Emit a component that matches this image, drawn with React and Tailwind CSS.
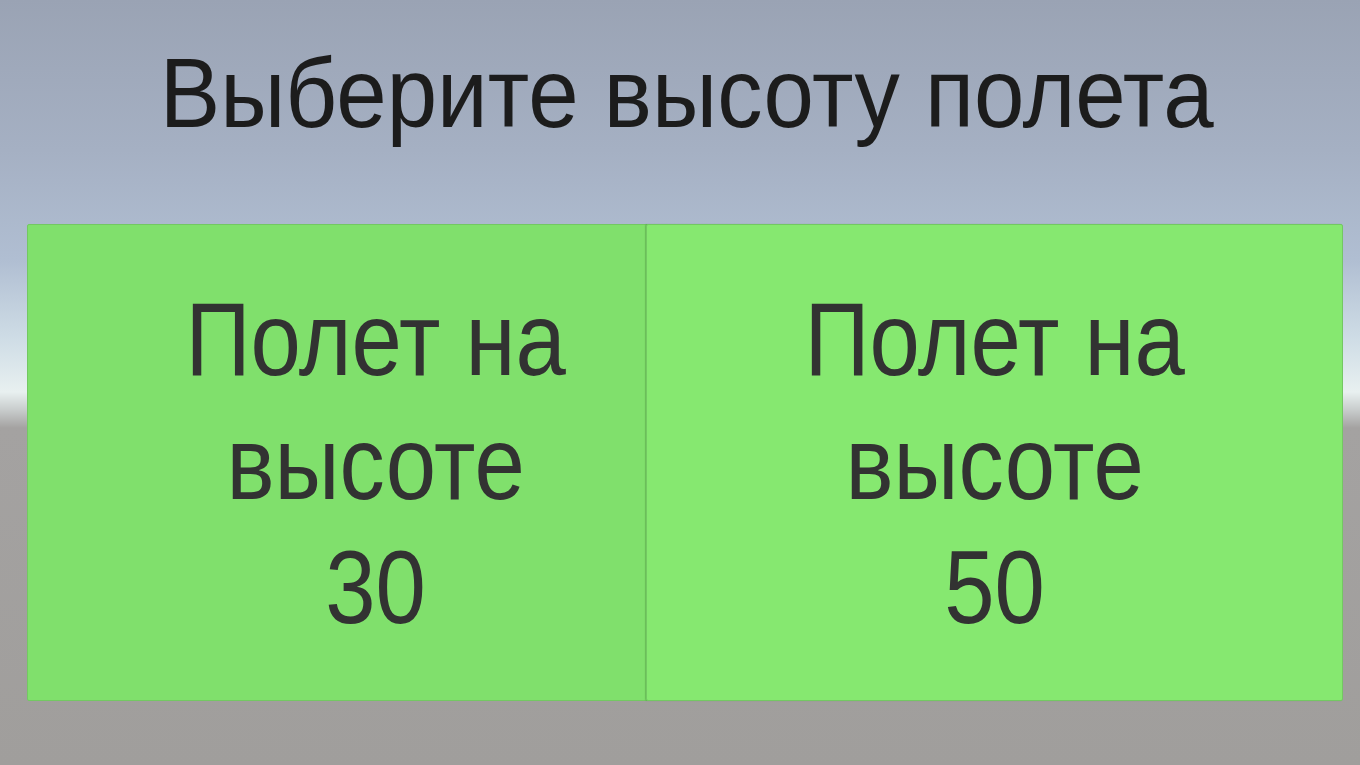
import React from 'react';

const options = [
  { height: 30, bg: 'bg-[#80e06c]' },
  { height: 50, bg: 'bg-[#86e870]' },
];

const AltitudeButton = ({ height, bg, first }) => (
  <button
    className={`${bg} ${first ? '' : '-ml-[78px] shadow-[-1px_0_1px_rgba(60,120,50,0.35)]'} relative w-[697px] h-[477px] shrink-0 rounded-[2px] border border-[#73c862] flex items-center justify-center text-[#323232]`}
  >
    <span className="block scale-x-[0.87] text-[104px] leading-[124px]">
      Полет на
      <br />
      высоте
      <br />
      {height}
    </span>
  </button>
);

export default function App() {
  return (
    <div
      className="w-[1360px] h-[765px] overflow-hidden font-['Liberation_Sans',Arial,sans-serif] bg-[linear-gradient(to_bottom,#9aa3b4_0px,#a5b0c3_150px,#b0bed2_260px,#cfdde6_340px,#e8f0f0_392px,#c8cccc_410px,#a4a2a1_428px,#a09e9c_765px)]"
    >
      <div className="h-[224px] flex justify-center pt-[37px] pl-[14px]">
        <h1 className="scale-x-[0.925] text-[98px] leading-[112px] text-[#1c1c1c] whitespace-nowrap">
          Выберите высоту полета
        </h1>
      </div>
      <div className="flex pl-[27px]">
        {options.map((o, i) => (
          <AltitudeButton key={o.height} {...o} first={i === 0} />
        ))}
      </div>
    </div>
  );
}
